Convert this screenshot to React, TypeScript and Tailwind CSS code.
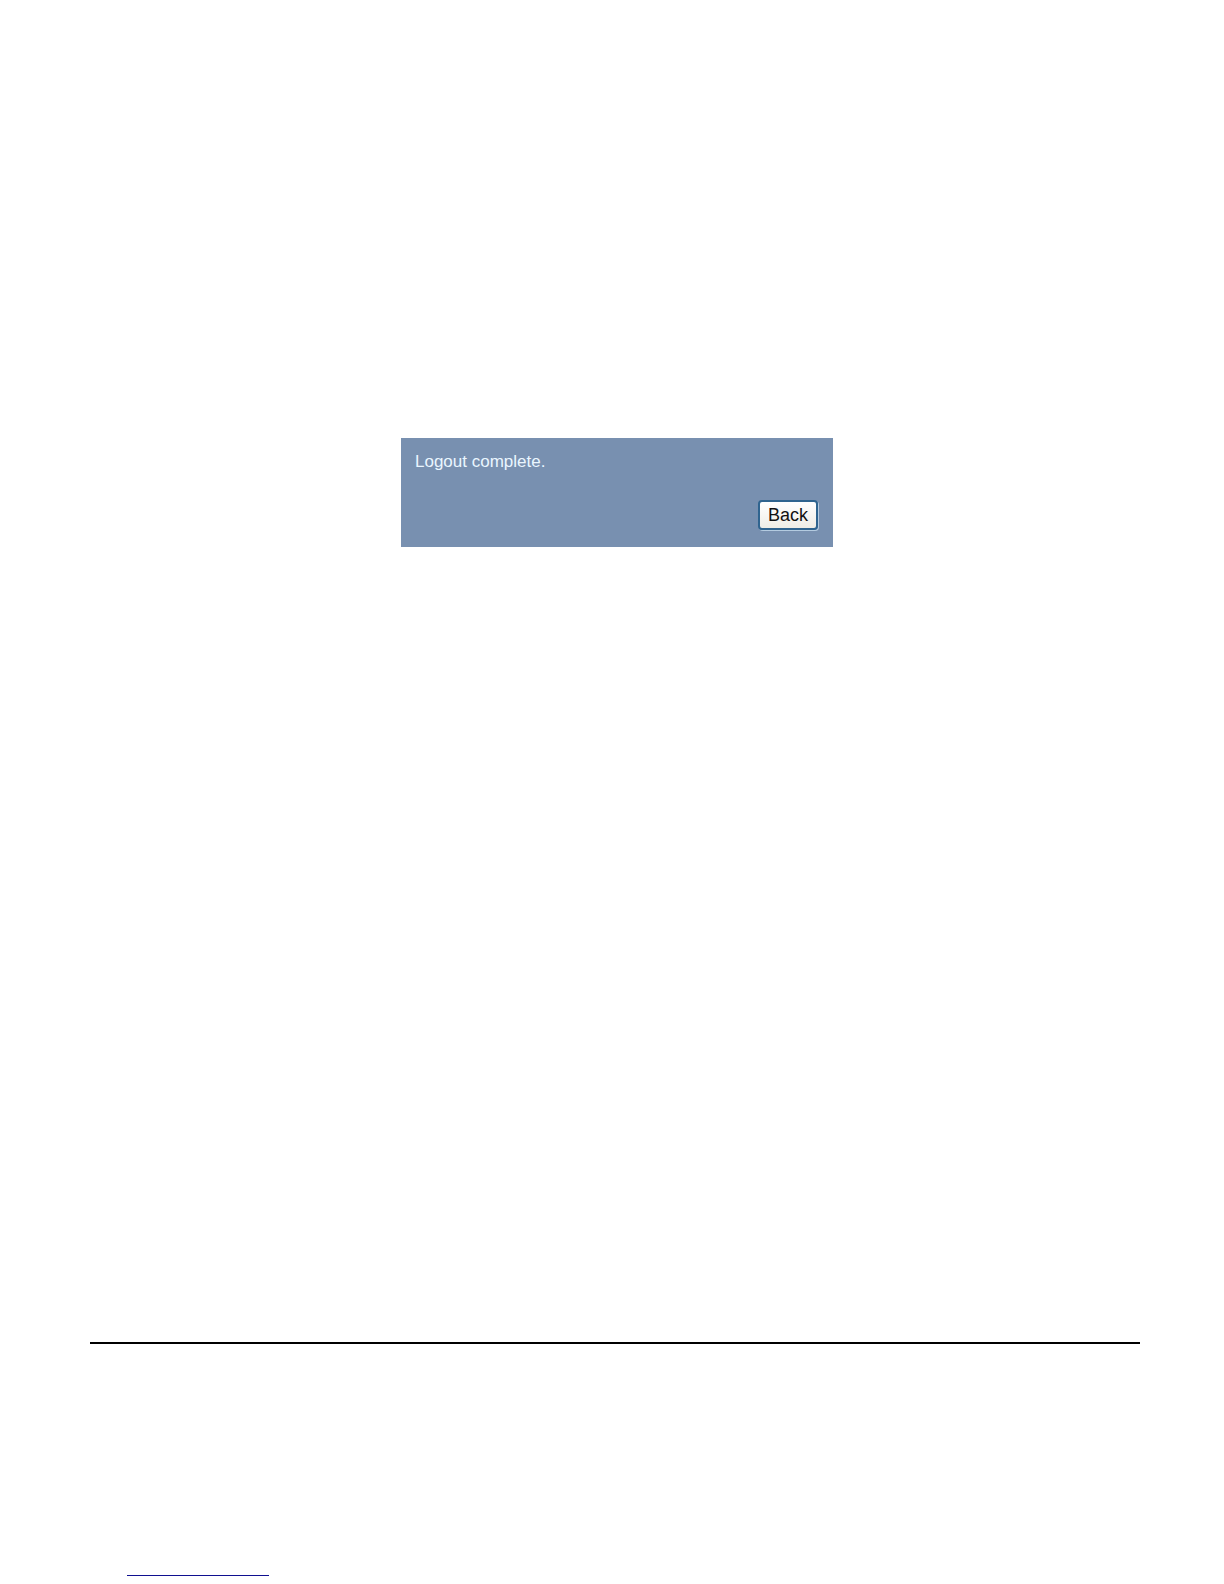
export default function App() {
  return (
    <main className="min-h-screen bg-white pt-[438px] pr-[84px] pb-2 pl-[90px] font-['Liberation_Sans',Arial,sans-serif]">
      <section className="flex justify-center pl-1" aria-label="Logout">
        <div className="flex w-full max-w-[432px] flex-col gap-6 bg-[#7890b0] px-[14px] pt-3 pb-4">
          <p className="text-[17px] leading-6 text-[#eaf6ff]">Logout complete.</p>

          {/* one pixel of right/bottom margin leaves room for the bevel */}
          <button
            type="button"
            className="mt-[2px] mr-px mb-px h-[30px] self-end rounded-[4px] border-2 border-[#2f648f] bg-gradient-to-b from-white to-[#efede6] px-2 text-lg leading-6 text-[#111111] shadow-[1px_1px_0_0_#b4cbe0]"
          >
            Back
          </button>
        </div>
      </section>

      <hr className="mt-[795px] border-t-2 border-black" />

      {/* footer rule */}
      <footer className="pt-[231px] pl-[37px]">
        <div className="h-px w-[142px] bg-[#101090]" />
      </footer>
    </main>
  );
}
